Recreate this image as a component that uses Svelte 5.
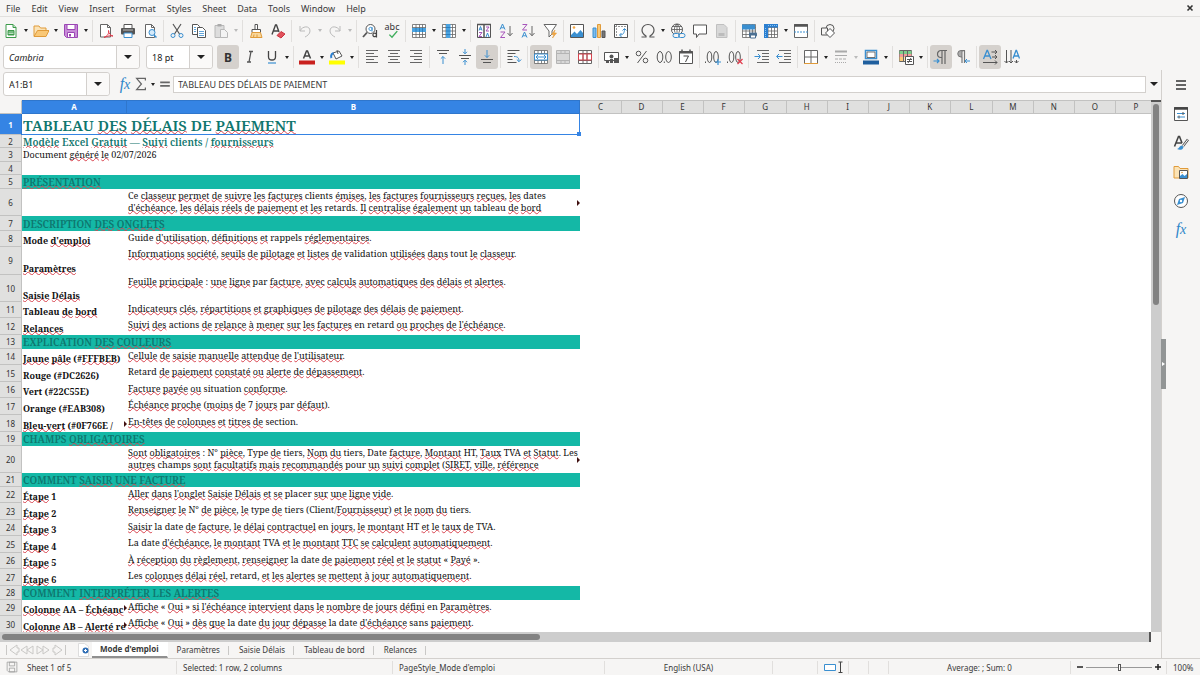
<script lang="ts">
  type Tool = {
    icon?: string;
    label?: string;
    drop?: boolean;
    active?: boolean;
    disabled?: boolean;
    sep?: boolean;
  };

  type Row = {
    h: number;
    kind?: 'title' | 'subtitle' | 'plain' | 'section';
    a?: string;
    b?: string;
    moreA?: boolean;
    moreB?: boolean;
  };

  const menus = ['File', 'Edit', 'View', 'Insert', 'Format', 'Styles', 'Sheet', 'Data', 'Tools', 'Window', 'Help'];

  const gridLines = '<path d="M1.5 1.5h13v13h-13zM1.5 4.5h13M1.5 8h13M1.5 11.5h13M5 1.5v13M8.5 1.5v13M11.5 1.5v13" fill="#fff" stroke="#666" stroke-width=".8"/>';
  const page = '<path d="M3.5 1.5h6l3 3v10h-9z" fill="#fff" stroke="#666"/><path d="M9.5 1.5v3h3" stroke="#666"/>';

  const icons: Record<string, string> = {
    new: '<path d="M3 1.5h7l3 3v10H3z" fill="#fff" stroke="#3c9a4a"/><path d="M10 1.5v3h3" fill="#bfe3c5" stroke="#3c9a4a"/><path d="M5 7.5h6v4.500H5z" fill="#3c9a4a" stroke="#3c9a4a"/><path d="M5.500 9h5M5.500 10.500h5" stroke="#d6f0da" stroke-width=".8"/>',
    open: '<path d="M1 13V3h5l1.500 2H13v2.500" fill="#fbe3b6" stroke="#e09b3a"/><path d="M1 13.500L4.500 7.500H16L13 13.500z" fill="#f9c877" stroke="#e09b3a"/>',
    save: '<path d="M1.500 1.500h13v13h-11l-2-2z" fill="#c88bd8" stroke="#9b46b4"/><path d="M4 1.500h8v5H4z" fill="#fff" stroke="#9b46b4"/><path d="M4.500 9.500h7v5h-7z" fill="#fff" stroke="#9b46b4"/><path d="M6 11v2.500h2V11z" fill="#9b46b4"/>',
    pdf: '<path d="M2.500 1.500h7l3 3v9.500h-10z" fill="#fff" stroke="#666"/><path d="M9.500 1.500v3h3" stroke="#666"/><path d="M6 14.500c4-2 5-4 4.500-7 0 3 2 5 4.500 5.500-3-.5-6 0-9 1.500z" stroke="#e0394a"/>',
    print: '<path d="M4 5.500v-4h8v4" fill="#fff" stroke="#555"/><rect x="1" y="5" width="14" height="6.500" rx="1" fill="#555"/><path d="M3 7h10" stroke="#bbb"/><path d="M4 10h8v4.500H4z" fill="#fff" stroke="#3a8fd0"/>',
    preview: page + '<circle cx="10" cy="9.500" r="3" fill="#d5eafa" stroke="#3a8fd0"/><path d="M12 12l2.500 2.500" stroke="#3a8fd0" stroke-width="1.500"/>',
    cut: '<path d="M4 1l6.500 10M12 1L5.500 11" stroke="#555" stroke-width="1.200"/><circle cx="4" cy="12.500" r="2" stroke="#3a8fd0"/><circle cx="12" cy="12.500" r="2" stroke="#3a8fd0"/>',
    copy: '<path d="M1.500 1.500h5l2 2v8h-7z" fill="#fff" stroke="#555"/><path d="M6.500 4.500h5l3 3v7h-8z" fill="#fff" stroke="#555"/><path d="M3 4.500h2M3 6.500h2M3 8.500h2M8 8.500h5M8 10.500h5M8 12.500h5" stroke="#3a8fd0" stroke-width=".8"/>',
    paste: '<path d="M2 2.500h9v12H2z" fill="#ddd" stroke="#b8b8b8"/><path d="M4.500 1h4v2.500h-4z" fill="#aaa"/><path d="M7.500 6.500h4l3 3v5h-7z" fill="#f3f3f3" stroke="#b8b8b8"/>',
    clone: '<path d="M7 1.500h2.500v5H7z" fill="#fff" stroke="#555"/><path d="M4 6.500h8.500v3H4z" fill="#fff" stroke="#555"/><path d="M4 9.500l-1.500 5h11.500l-1.500-5z" fill="#f9d79b" stroke="#e09b3a"/><path d="M6 11.500l-.5 3M9 11.500v3" stroke="#e09b3a"/>',
    clear: '<path d="M2 11.500L5.500 2h1L9 9M3.500 8h5" stroke="#444" stroke-width="1.400"/><path d="M7 12.500l4-4 4 2.500-4 4z" fill="#e2525c" stroke="#c9333f"/>',
    undo: '<path d="M3 3v5h5M3 8c2-5 10-6 10 0 0 3-3 5-5 6" stroke="#bbb"/>',
    redo: '<path d="M13 3v5H8M13 8c-2-5-10-6-10 0 0 3 3 5 5 6" stroke="#bbb"/>',
    find: '<circle cx="8.500" cy="6" r="4.500" fill="#fff" stroke="#555"/><path d="M5 9.500L1 14" stroke="#555" stroke-width="1.800"/><path d="M10 4v4.500M10 6.500a1.600 1.600 0 1 0-.1.200" stroke="#3a8fd0"/><path d="M14.500 7v7.500M14.500 12a1.800 1.800 0 1 0-.1.500" stroke="#444" stroke-width="1.200"/>',
    rows: gridLines + '<path d="M1 5h14v4H1z" fill="#4aa3e0"/><path d="M5 5v4M8.500 5v4M11.500 5v4" stroke="#2b7fc0"/>',
    cols: gridLines + '<path d="M5 1h4.500v14H5z" fill="#4aa3e0"/><path d="M5 4.500h4.500M5 8h4.500M5 11.500h4.500" stroke="#2b7fc0"/>',
    sort: '<path d="M1.500 1.500h13v13h-13z" fill="#fff" stroke="#555"/><path d="M1 1.500h14M8 2v13" stroke="#555" stroke-width="1.500"/><path d="M3 7.500l1.500-4L6 7.500M3.500 6.200h2M10 14l1.500-4L13 14" stroke="#3a8fd0"/><path d="M3 9.500h3l-3 4h3M10 4h3l-3 4h3" stroke="#a755bb"/>',
    asc: '<path d="M2 6.500L4.500 1 7 6.500M3 4.800h3" stroke="#3a8fd0"/><path d="M2.500 9H7l-4.500 5.500H7" stroke="#a755bb"/><path d="M12 3v9.500M9.500 10l2.500 2.800 2.500-2.800" stroke="#666"/>',
    desc: '<path d="M2.500 1.500H7L2.500 7H7" stroke="#a755bb"/><path d="M2 14.500L4.500 9 7 14.500M3 12.800h3" stroke="#3a8fd0"/><path d="M12 3v9.500M9.500 10l2.500 2.800 2.500-2.800" stroke="#666"/>',
    filter: '<path d="M2 1.500h12.500L10 8v3L7 14V8z" fill="#fff" stroke="#666"/><path d="M13 7l-3.500 4.500H12L10.500 15l4-5H12z" fill="#f5a742" stroke="#e09b3a" stroke-width=".6"/>',
    image: '<path d="M1.500 1.500h13v13h-13z" fill="#fff" stroke="#555"/><path d="M2 14v-2l3.500-3.500L8 11l3.500-4L14 10v4z" fill="#3a8fd0"/><circle cx="5" cy="4.500" r="1.300" fill="#f5a742"/>',
    chart: '<path d="M2 5h3v9.500H2z" fill="#7dbcec" stroke="#3a8fd0"/><path d="M6.500 1.500h3v13h-3z" fill="#f9c877" stroke="#e09b3a"/><path d="M11 8h3v6.500h-3z" fill="#777" stroke="#555"/>',
    pivot: '<path d="M1.500 1.500h13v13h-13z" fill="#fff" stroke="#555"/><path d="M2 3.500h12M3.500 2v12" stroke="#999" stroke-dasharray="2 1"/><path d="M7 12c3 0 4.500-2 4.500-6M9.500 7.500l2-2 2 2M8.500 10l-2 2 2 2" stroke="#3a8fd0"/>',
    omega: '<path d="M1.500 14h4.500v-1C3.500 11.500 2 9.500 2 7c0-3 2.500-5.500 6-5.500S14 4 14 7c0 2.500-1.500 4.500-4 6v1h4.500" stroke="#555" stroke-width="1.200"/>',
    link: '<circle cx="7" cy="6.500" r="5.500" fill="#fff" stroke="#555"/><path d="M1.500 6.500h11M2.500 3.500h9M7 1v10M7 1C3.500 4 3.500 9 7 12M7 1c3.500 3 3.500 8 0 11" stroke="#555" stroke-width=".8"/><rect x="3" y="10.500" width="6.500" height="4" rx="2" fill="#f6f5f4" stroke="#3a8fd0"/><rect x="8.500" y="10.500" width="6.500" height="4" rx="2" stroke="#3a8fd0"/>',
    comment: '<path d="M1.500 2h13v9H7l-2.500 3.500V11h-3z" fill="#fff" stroke="#555"/>',
    header: '<path d="M2.500 1.500h7.500l3 3v10H2.500z" fill="#d8d8d8" stroke="#c0c0c0"/><path d="M4.500 10h6v3h-6z" fill="#bcbcbc"/>',
    area: gridLines + '<path d="M1 1.500h13v5H1z" fill="#3a8fd0"/><rect x="8" y="9.500" width="8" height="4" rx="1" fill="#4b6f92"/><path d="M9.500 12h5v3h-5z" fill="#fff" stroke="#4b6f92"/>',
    freeze: gridLines + '<path d="M1 1h14v3.500H5V15H1z" fill="#2b7fd0"/><path d="M2.500 5v9M5 2.500h9" stroke="#8cc3f0" stroke-dasharray="1 1"/>',
    split: '<path d="M1.500 1.500h13v13h-13z" fill="#fff" stroke="#666"/><path d="M1 2.500h14" stroke="#555" stroke-width="2.500"/><path d="M1 9h14" stroke="#3a8fd0" stroke-dasharray="2 1"/>',
    shapes: '<circle cx="10" cy="5.500" r="4" stroke="#555"/><path d="M1.500 5h6v7h-6z" fill="#f6f5f4" stroke="#555"/><path d="M10 5.500l4.500 4.500-4.500 4.500L5.500 10z" fill="#fff" stroke="#555"/>',
    italic: '<path d="M7 2.500h4M5 13h4M9 2.500L7 13" stroke="#555" stroke-width="1.300"/>',
    under: '<path d="M4.500 2v6c0 4 7 4 7 0V2" stroke="#444" stroke-width="1.300"/><path d="M4 14h8" stroke="#3a8fd0" stroke-width="1.200"/>',
    color: '<path d="M4.500 9.500L7.500 2h1l3 7.500M5.500 7h5" stroke="#444" stroke-width="1.500"/><path d="M0 11.500h16v4H0z" fill="#c9211e"/>',
    fill: '<path d="M4 4l6-2 3 5-6 3z" fill="#fff" stroke="#555"/><path d="M8 1l1 4" stroke="#555"/><path d="M4.500 4C1.500 5 2 8 2.500 9" stroke="#2b7fd0" stroke-width="2"/><path d="M0 11.500h16v4H0z" fill="#ffff00"/>',
    left: '<path d="M2 1.500h12M2 4.500h8M2 7.500h12M2 10.500h8M2 13.500h12" stroke="#666"/>',
    center: '<path d="M2 1.500h12M4 4.500h8M2 7.500h12M4 10.500h8M2 13.500h12" stroke="#666"/>',
    right: '<path d="M2 1.500h12M6 4.500h8M2 7.500h12M6 10.500h8M2 13.500h12" stroke="#666"/>',
    top: '<path d="M2 1.500h12M4 4.500h8" stroke="#555"/><path d="M8 15V7.500M5.800 9.700L8 7.500l2.200 2.200" stroke="#3a8fd0"/>',
    middle: '<path d="M2 6.500h12M4 9.500h8" stroke="#555"/><path d="M8 0v4.500M6 2.800l2 2 2-2M8 16v-4.500M6 13.200l2-2 2 2" stroke="#3a8fd0"/>',
    bottom: '<path d="M2 10.500h12M4 13.500h8" stroke="#555"/><path d="M8 1v7.500M5.800 6.300L8 8.500l2.200-2.200" stroke="#3a8fd0"/>',
    wrap: '<path d="M1.500 1.500h12M1.500 4.500h8M1.500 7.500h5M1.500 10.500h5M1.500 13.500h9" stroke="#555"/><path d="M8 7.500c4 0 5 1.500 5 5M10.800 10.500l2.200 2.200 2.200-2.200" stroke="#3a8fd0"/>',
    merge: gridLines + '<path d="M1.500 5h13v6h-13z" fill="#fff" stroke="#3a8fd0"/><path d="M3 8h10M5 6L3 8l2 2M11 6l2 2-2 2" stroke="#3a8fd0"/>',
    mergec: '<path d="M1.500 1.500h13v13h-13zM1.500 4.500h13M1.500 11.500h13M6 1.500v3M10 1.500v3M6 11.500v3M10 11.500v3" fill="#d8d8d8" stroke="#b4b4b4"/>',
    unmerge: '<path d="M1.500 1.500h13v13h-13zM1.500 4.500h13M1.500 11.500h13M6 1.500v13M10 1.500v13" fill="#fff" stroke="#666"/><path d="M1.500 5h13v6h-13zM6 5v6M10 5v6" stroke="#d8434e"/>',
    currency: '<path d="M.5 3.500h14v8H.5z" fill="#fff" stroke="#555"/><circle cx="7.500" cy="7.500" r="2" fill="#555"/><path d="M2 12h3v2H2zM6 10h3v4H6zM10 9h5v5h-5z" fill="#555"/>',
    percent: '<circle cx="4.500" cy="4.500" r="2.300" stroke="#555"/><circle cx="11.500" cy="11.500" r="2.300" stroke="#555"/><path d="M12.500 2l-9 12" stroke="#555"/>',
    number: '<ellipse cx="4" cy="8" rx="2.800" ry="5.500" stroke="#555"/><ellipse cx="12.500" cy="8" rx="2.800" ry="5.500" stroke="#555"/><path d="M8.300 12.500v1.500" stroke="#555"/>',
    date: '<path d="M1.500 2.500h13v12h-13z" fill="#fff" stroke="#555"/><path d="M1 3.500h14" stroke="#555" stroke-width="2"/><path d="M4 .5v3M12 .5v3" stroke="#555" stroke-width="1.500"/><path d="M5.500 7h5L7.500 13" stroke="#444"/>',
    addDec: '<path d="M.5 12.500v1.500" stroke="#555"/><ellipse cx="4.500" cy="8" rx="2.300" ry="5.500" stroke="#555"/><ellipse cx="11" cy="8" rx="2.300" ry="5.500" stroke="#555"/><path d="M10 13h6M13 10v6" stroke="#3a8fd0" stroke-width="1.200"/>',
    delDec: '<path d="M.5 12.500v1.500" stroke="#555"/><ellipse cx="4.500" cy="8" rx="2.300" ry="5.500" stroke="#555"/><ellipse cx="11" cy="8" rx="2.300" ry="5.500" stroke="#555"/><path d="M10.500 10l5 5M15.500 10l-5 5" stroke="#e0394a" stroke-width="1.200"/>',
    indent: '<path d="M3 1.500h12M8 4.500h7M8 7.500h7M8 10.500h7M3 13.500h12" stroke="#666"/><path d="M.5 7.500H6M4 5l2.500 2.500L4 10" stroke="#3a8fd0"/>',
    outdent: '<path d="M3 1.500h12M8 4.500h7M8 7.500h7M8 10.500h7M3 13.500h12" stroke="#666"/><path d="M6.500 7.500H1M3 5L.5 7.500 3 10" stroke="#3a8fd0"/>',
    borders: '<path d="M1.500 1.500h13v13h-13zM8 1.500v13M1.500 8h13" fill="#fff" stroke="#666"/><path d="M1 14.500h14" stroke="#e09b3a"/>',
    lines: '<path d="M2 2.500h12" stroke="#aaa" stroke-width="2"/><path d="M2 6.500h12" stroke="#aaa"/><path d="M2 10h12" stroke="#aaa" stroke-dasharray="3 1"/><path d="M2 13.500h12" stroke="#aaa" stroke-dasharray="1 1"/>',
    lineColor: '<path d="M2.500 1.500h11v8h-11z" fill="#fff" stroke="#3a8fd0" stroke-width="1.500"/><path d="M4 3h8v5.500H4z" stroke="#555" stroke-width=".8"/><path d="M0 11.500h16v4H0z" fill="#1f5f9e"/>',
    cond: '<path d="M1.500 1.500h12v11h-12z" fill="#fff" stroke="#666"/><path d="M1.500 2h12v3h-12z" fill="#7ccf8b"/><path d="M1.500 5h12v3h-12z" fill="#f39a9a"/><path d="M1.500 8h5v4h-5z" fill="#f9c877"/><path d="M5.500 1.500v11M9.500 1.500v6" stroke="#666"/><path d="M7.500 7.500h8v8h-8z" fill="#fff" stroke="#555"/><path d="M9 10.500h5M9 12.500h5M13 9l-3 5" stroke="#555"/>',
    ltr: '<path d="M14 1.500H8a3.500 3.500 0 0 0 0 7h1V2M9 8v7M12 1.500V15" fill="none" stroke="#666" stroke-width="1.200"/><path d="M.5 12H6M4 10l2 2-2 2" stroke="#3a8fd0" stroke-width="1.200"/>',
    rtl: '<path d="M10 1.500H6a3.200 3.200 0 0 0 0 6.500h1V2z" fill="#aaa" stroke="#777"/><path d="M7 8v6M9.500 1.500V14" stroke="#777" stroke-width="1.200"/><path d="M15 12h-5M12 10l-2 2 2 2" stroke="#3a8fd0"/>',
    horiz: '<path d="M1.500 10L5 1.500h.5L9 10M3 7h4.500" stroke="#3a8fd0" stroke-width="1.300"/><path d="M9.500 3H15M13 1l2 2-2 2M10 8h5M13 6l2 2-2 2M1 13.500h14M13 11.500l2 2-2 2" stroke="#555"/>',
    vert: '<path d="M9 9.500l3-8h.5l3 8M10 7h4.500" stroke="#3a8fd0" stroke-width="1.300"/><path d="M2.500 1v13M.5 12l2 2 2-2M7 1v13M5 12l2 2 2-2M12.500 11v3M10.500 12l2 2 2-2" stroke="#555"/>',
    menu: '<path d="M3 4h10M3 8h10M3 12h10" stroke="#333" stroke-width="1.300"/>',
    props: '<path d="M1.500 1.500h13v13h-13z" fill="#fff" stroke="#555"/><path d="M1 2.500h14" stroke="#444" stroke-width="2.500"/><path d="M4 7.500h8M4 11h8" stroke="#3a8fd0"/><path d="M10 6v3M6 9.500v3" stroke="#555"/>',
    styles: '<path d="M1.500 11.500L5.500 1.500h1L9 8M3 8h6" stroke="#444" stroke-width="1.600"/><path d="M15 4.500L10 11" stroke="#555" stroke-width="2.600"/><path d="M15 4.500L10 11" stroke="#fff" stroke-width="1"/><path d="M4 14c2 0 2-3 5-3.500l1.500 1.500c-.5 3-4 3.500-6.500 2z" fill="#3a8fd0"/>',
    gallery: '<path d="M1 14V2.500h4.500L7 4.500h8V14z" fill="#fbe3b6" stroke="#e09b3a"/><path d="M6.500 6.500h8v8h-8z" fill="#fff" stroke="#555"/><path d="M7 14v-2l2.500-2 2 2 2.500-2v4z" fill="#3a8fd0"/><circle cx="9" cy="8.500" r=".8" fill="#e09b3a"/>',
    nav: '<circle cx="8" cy="8" r="6.500" fill="#fff" stroke="#555"/><path d="M12 4l-2 6-6 2 2-6z" fill="#3a8fd0"/><circle cx="8" cy="8" r="1.200" fill="#fff"/>',
    sigma: '<path d="M13 4V1.500H3L8.500 8 3 14.500h10V12" stroke="#666" stroke-width="1.400"/>',
    equals: '<path d="M2.500 6h11M2.500 10h11" stroke="#666" stroke-width="2"/>',
    addSheet: '<path d="M2.500 1.500h6l4 3v10h-10z" fill="#fff" stroke="#ddd"/><circle cx="9.500" cy="8.500" r="3" fill="#2f6eb5"/><path d="M8 8.500h3M9.500 7v3" stroke="#fff"/>',
    disk: '<path d="M1.500 1.500h13v13h-11l-2-2z" stroke="#999"/><path d="M4.500 1.500h7v5h-7zM4.500 9.500h7v5h-7z" stroke="#999"/>'
  };

  const t = (icon: string, label: string, extra: Tool = {}): Tool => ({ icon, label, ...extra });
  const sep: Tool = { sep: true };

  const standardBar: Tool[] = [
    t('new', 'New', { drop: true }), t('open', 'Open', { drop: true }), t('save', 'Save', { drop: true }), sep,
    t('pdf', 'Export as PDF'), t('print', 'Print'), t('preview', 'Print preview'), sep,
    t('cut', 'Cut'), t('copy', 'Copy'), t('paste', 'Paste', { drop: true, disabled: true }), sep,
    t('clone', 'Clone formatting'), t('clear', 'Clear formatting'), sep,
    t('undo', 'Undo', { drop: true, disabled: true }), t('redo', 'Redo', { drop: true, disabled: true }), sep,
    t('find', 'Find and replace'), t('spell', 'Spelling'), sep,
    t('rows', 'Rows', { drop: true }), t('cols', 'Columns', { drop: true }), sep,
    t('sort', 'Sort'), t('asc', 'Sort ascending'), t('desc', 'Sort descending'), t('filter', 'AutoFilter'), sep,
    t('image', 'Insert image'), t('chart', 'Insert chart'), t('pivot', 'Pivot table'), sep,
    t('omega', 'Special character', { drop: true }), t('link', 'Hyperlink'), t('comment', 'Comment'),
    t('header', 'Headers and footers', { disabled: true }), sep,
    t('area', 'Print area'), t('freeze', 'Freeze rows and columns', { drop: true }), t('split', 'Split window'), sep,
    t('shapes', 'Draw functions')
  ];

  const formatBar: Tool[] = [
    t('bold', 'Bold', { active: true }), t('italic', 'Italic'), t('under', 'Underline', { drop: true }), sep,
    t('color', 'Font color', { drop: true }), t('fill', 'Background color', { drop: true }), sep,
    t('left', 'Align left'), t('center', 'Center'), t('right', 'Align right'), sep,
    t('top', 'Align top'), t('middle', 'Center vertically'), t('bottom', 'Align bottom', { active: true }), sep,
    t('wrap', 'Wrap text'), sep,
    t('merge', 'Merge and center', { active: true }), t('mergec', 'Merge cells', { disabled: true }), t('unmerge', 'Unmerge cells'), sep,
    t('currency', 'Currency', { drop: true }), t('percent', 'Percent'), t('number', 'Number'), t('date', 'Date'), sep,
    t('addDec', 'Add decimal place'), t('delDec', 'Delete decimal place'), sep,
    t('indent', 'Increase indent'), t('outdent', 'Decrease indent'), sep,
    t('borders', 'Borders', { drop: true }), t('lines', 'Border style', { drop: true, disabled: true }),
    t('lineColor', 'Border color', { drop: true }), sep,
    t('cond', 'Conditional formatting', { drop: true }), sep,
    t('ltr', 'Left to right', { active: true }), t('rtl', 'Right to left'), sep,
    t('horiz', 'Text direction horizontal', { active: true }), t('vert', 'Text direction vertical')
  ];

  const sideItems = [
    ['menu', 'Sidebar settings'],
    ['props', 'Properties'],
    ['styles', 'Styles'],
    ['gallery', 'Gallery'],
    ['nav', 'Navigator'],
    ['fx', 'Functions']
  ];

  const columns = 'CDEFGHIJKLMNOP'.split('');

  const rows: Row[] = [
    { h: 21, kind: 'title', a: 'TABLEAU DES DÉLAIS DE PAIEMENT' },
    { h: 13, kind: 'subtitle', a: 'Modèle Excel Gratuit — Suivi clients / fournisseurs' },
    { h: 14, kind: 'plain', a: 'Document généré le 02/07/2026' },
    { h: 13 },
    { h: 14, kind: 'section', a: 'PRÉSENTATION' },
    {
      h: 27,
      b: "Ce classeur permet de suivre les factures clients émises, les factures fournisseurs reçues, les dates\nd'échéance, les délais réels de paiement et les retards. Il centralise également un tableau de bord",
      moreB: true
    },
    { h: 15, kind: 'section', a: 'DESCRIPTION DES ONGLETS' },
    { h: 16, a: "Mode d'emploi", b: "Guide d'utilisation, définitions et rappels réglementaires." },
    { h: 28, a: 'Paramètres', b: 'Informations société, seuils de pilotage et listes de validation utilisées dans tout le classeur.' },
    { h: 27, a: 'Saisie Délais', b: 'Feuille principale : une ligne par facture, avec calculs automatiques des délais et alertes.' },
    { h: 16, a: 'Tableau de bord', b: 'Indicateurs clés, répartitions et graphiques de pilotage des délais de paiement.' },
    { h: 17, a: 'Relances', b: "Suivi des actions de relance à mener sur les factures en retard ou proches de l'échéance." },
    { h: 14, kind: 'section', a: 'EXPLICATION DES COULEURS' },
    { h: 16, a: 'Jaune pâle (#FFFBEB)', b: "Cellule de saisie manuelle attendue de l'utilisateur." },
    { h: 17, a: 'Rouge (#DC2626)', b: 'Retard de paiement constaté ou alerte de dépassement.' },
    { h: 16, a: 'Vert (#22C55E)', b: 'Facture payée ou situation conforme.' },
    { h: 17, a: 'Orange (#EAB308)', b: 'Échéance proche (moins de 7 jours par défaut).' },
    { h: 17, a: 'Bleu-vert (#0F766E /', b: 'En-têtes de colonnes et titres de section.', moreA: true },
    { h: 14, kind: 'section', a: 'CHAMPS OBLIGATOIRES' },
    {
      h: 27,
      b: 'Sont obligatoires : N° pièce, Type de tiers, Nom du tiers, Date facture, Montant HT, Taux TVA et Statut. Les\nautres champs sont facultatifs mais recommandés pour un suivi complet (SIRET, ville, référence',
      moreB: true
    },
    { h: 14, kind: 'section', a: 'COMMENT SAISIR UNE FACTURE' },
    { h: 16, a: 'Étape 1', b: "Aller dans l'onglet Saisie Délais et se placer sur une ligne vide." },
    { h: 17, a: 'Étape 2', b: 'Renseigner le N° de pièce, le type de tiers (Client/Fournisseur) et le nom du tiers.' },
    { h: 16, a: 'Étape 3', b: 'Saisir la date de facture, le délai contractuel en jours, le montant HT et le taux de TVA.' },
    { h: 17, a: 'Étape 4', b: "La date d'échéance, le montant TVA et le montant TTC se calculent automatiquement." },
    { h: 16, a: 'Étape 5', b: 'À réception du règlement, renseigner la date de paiement réel et le statut « Payé ».' },
    { h: 17, a: 'Étape 6', b: 'Les colonnes délai réel, retard, et les alertes se mettent à jour automatiquement.' },
    { h: 14, kind: 'section', a: 'COMMENT INTERPRÉTER LES ALERTES' },
    { h: 16, a: 'Colonne AA – Échéanc', b: "Affiche « Oui » si l'échéance intervient dans le nombre de jours défini en Paramètres.", moreA: true },
    { h: 17, a: 'Colonne AB – Alerté re', b: "Affiche « Oui » dès que la date du jour dépasse la date d'échéance sans paiement.", moreA: true }
  ];

  const sheets = ["Mode d'emploi", 'Paramètres', 'Saisie Délais', 'Tableau de bord', 'Relances'];
  let current = $state(0);
  let zoom = $state(100);

  // words the English dictionary accepts
  const known = new Set(
    ('TABLEAU DE Excel clients Document DESCRIPTION EXPLICATION CHAMPS COMMENT LES Ce dates retards tableau Mode Guide ' +
      'rappels validation tout par Tableau actions en retard Retard Rouge Vert Orange situation section N° Type type tiers ' +
      'Date date HT TVA Les champs pour placer Client la La sans AA AB re').split(' ')
  );

  function words(text: string) {
    return text.split(/([\p{L}\d°'-]+)/u).map((w, i) => ({
      w,
      bad: i % 2 === 1 && !/\d/.test(w) && !known.has(w)
    }));
  }
</script>

{#snippet icon(name: string)}
  {#if name === 'spell'}
    <span class="spell">abc<svg viewBox="0 0 16 16" aria-hidden="true"><path d="M5 11l3 3 6-7" stroke="#3fae5c" stroke-width="1.600" /></svg></span>
  {:else if name === 'bold'}
    <b class="bold">B</b>
  {:else if name === 'fx'}
    <i class="fx">f<small>x</small></i>
  {:else}
    <svg class="icon" viewBox="0 0 16 16" aria-hidden="true">{@html icons[name]}</svg>
  {/if}
{/snippet}

{#snippet toolbar(items: Tool[])}
  {#each items as item}
    {#if item.sep}
      <span class="sep"></span>
    {:else}
      <button type="button" class="tool" class:active={item.active} disabled={item.disabled} aria-label={item.label}>
        {@render icon(item.icon ?? '')}
      </button>
      {#if item.drop}
        <button type="button" class="drop" disabled={item.disabled} aria-label={`${item.label} options`}><span class="arrow"></span></button>
      {/if}
    {/if}
  {/each}
{/snippet}

{#snippet checked(text: string)}{#each words(text) as part}{#if part.bad}<span class="bad">{part.w}</span>{:else}{part.w}{/if}{/each}{/snippet}

<div class="app">
  <nav class="menubar">
    {#each menus as m}
      <button type="button">{m}</button>
    {/each}
    <button type="button" class="close" aria-label="Close document">
      <svg viewBox="0 0 8 8" aria-hidden="true"><path d="M1.500 1.500l5 5M6.500 1.500l-5 5" stroke="#333" stroke-width="1.600" /></svg>
    </button>
  </nav>

  <div class="toolbar">{@render toolbar(standardBar)}</div>

  <div class="toolbar format">
    <div class="combo font">
      <input aria-label="Font name" value="Cambria" />
      <button type="button" aria-label="Choose font"><span class="arrow big"></span></button>
    </div>
    <div class="combo size">
      <input aria-label="Font size" value="18 pt" />
      <button type="button" aria-label="Choose size"><span class="arrow big"></span></button>
    </div>
    {@render toolbar(formatBar)}
  </div>

  <div class="body">
    <main>
      <div class="formula">
        <div class="combo name">
          <input aria-label="Name box" value="A1:B1" />
          <button type="button" aria-label="Choose range"><span class="arrow big"></span></button>
        </div>
        <button type="button" class="small" aria-label="Function wizard">{@render icon('fx')}</button>
        <button type="button" class="small" aria-label="Select function">{@render icon('sigma')}</button>
        <button type="button" class="drop" aria-label="Function list"><span class="arrow"></span></button>
        <button type="button" class="small" aria-label="Formula">{@render icon('equals')}</button>
        <input class="line" aria-label="Input line" value="TABLEAU DES DÉLAIS DE PAIEMENT" />
        <button type="button" class="expand" aria-label="Expand formula bar"><span class="arrow big"></span></button>
      </div>

      <div class="sheet">
        <div class="grid">
          <table>
            <colgroup>
              <col class="c-num" />
              <col class="c-a" />
              <col class="c-b" />
              {#each columns as _, i}
                <col class={i % 5 === 4 ? 'c-wide' : 'c-std'} />
              {/each}
            </colgroup>
            <thead>
              <tr>
                <th class="corner" aria-label="Select all"></th>
                <th class="on">A</th>
                <th class="on">B</th>
                {#each columns as c}
                  <th>{c}</th>
                {/each}
              </tr>
            </thead>
            <tbody>
              {#each rows as row, i}
                <tr>
                  <th class:on={i === 0}><div class="num" style={`height:${row.h}px`}>{i + 1}</div></th>
                  {#if row.kind}
                    <td colspan="2" class={row.kind}>
                      <div class="cell" style={`height:${row.h}px`}><span>{@render checked(row.a ?? '')}</span></div>
                      {#if i === 0}<span class="handle"></span>{/if}
                    </td>
                  {:else}
                    <td class="label">
                      <div class="cell" style={`height:${row.h}px`}><span>{@render checked(row.a ?? '')}</span></div>
                      {#if row.moreA}<span class="more"></span>{/if}
                    </td>
                    <td class="text">
                      <div class="cell" style={`height:${row.h}px`}><span>{@render checked(row.b ?? '')}</span></div>
                      {#if row.moreB}<span class="more"></span>{/if}
                    </td>
                  {/if}
                  <td colspan="14"></td>
                </tr>
              {/each}
            </tbody>
          </table>
        </div>
        <div class="vscroll"><div class="thumb"></div></div>
      </div>
      <div class="hscroll"><div class="thumb"></div></div>

      <div class="tabs">
        <div class="tabnav" aria-hidden="true">
          <svg viewBox="0 0 62 12"><path d="M1.500 1v10M12 1L5 6l7 5V8h2V4h-2zM22 2l-6 4 6 4zM28 2l-6 4 6 4zM32 2l6 4-6 4zM38 2l6 4-6 4zM50 1l7 5-7 5V8h-2V4h2zM60.500 1v10" stroke="#c9c8c6" fill="none" /></svg>
        </div>
        <button type="button" class="add" aria-label="Add sheet">{@render icon('addSheet')}</button>
        {#each sheets as s, i}
          <button type="button" class="tab" class:current={i === current} onclick={() => (current = i)}>{s}</button>
        {/each}
      </div>
    </main>

    <aside>
      {#each sideItems as [name, label]}
        <button type="button" aria-label={label}>{@render icon(name)}</button>
      {/each}
      <div class="grip"></div>
    </aside>
  </div>

  <footer>
    <div class="doc">{@render icon('disk')}<span>Sheet 1 of 5</span></div>
    <div>Selected: 1 row, 2 columns</div>
    <div>PageStyle_Mode d'emploi</div>
    <div class="mid">English (USA)</div>
    <div></div>
    <div class="mode">
      <svg viewBox="0 0 20 12" aria-hidden="true"><path d="M.5 3.500h11v6H.5z" fill="#fff" stroke="#3a8fd0" /><path d="M14.500 1h4M14.500 11.500h4M16.500 1v10" stroke="#444" fill="none" /></svg>
    </div>
    <div></div>
    <div></div>
    <div class="mid">Average: ; Sum: 0</div>
    <div class="zoom">
      <button type="button" aria-label="Zoom out" onclick={() => (zoom -= 5)}><svg viewBox="0 0 8 8" aria-hidden="true"><path d="M1 4h6" stroke="#222" stroke-width="1.500" /></svg></button>
      <input type="range" min="0" max="200" bind:value={zoom} aria-label="Zoom" />
      <button type="button" aria-label="Zoom in" onclick={() => (zoom += 5)}><svg viewBox="0 0 8 8" aria-hidden="true"><path d="M1 4h6M4 1v6" stroke="#222" stroke-width="1.500" /></svg></button>
    </div>
    <div>{zoom}%</div>
  </footer>
</div>

<style>
  :global(body) {
    margin: 0;
    background: #f6f5f4;
  }

  .app {
    display: flex;
    flex-direction: column;
    height: 100vh;
    overflow: hidden;
    background: #f6f5f4;
    color: #3a3a3a;
    font-family: 'Noto Sans', 'Open Sans', sans-serif;
    font-size: 8px;
  }

  button,
  input {
    box-sizing: border-box;
    margin: 0;
    padding: 0;
    border: 0;
    background: none;
    color: inherit;
    font: inherit;
  }

  svg {
    display: block;
    fill: none;
  }

  .menubar {
    display: flex;
    align-items: center;
    gap: 11px;
    box-sizing: border-box;
    height: 17px;
    flex: none;
    padding: 0 6px;
    border-bottom: 1px solid #e1e0de;
    font-size: 9px;
  }

  .close {
    margin-left: auto;
  }

  .close svg {
    width: 8px;
    height: 8px;
  }

  .toolbar {
    display: flex;
    align-items: center;
    height: 27px;
    flex: none;
  }

  .tool {
    display: grid;
    place-items: center;
    width: 22px;
    height: 24px;
    flex: none;
    border-radius: 3px;
  }

  .tool.active {
    background: #d5d1cd;
  }

  .icon {
    width: 16px;
    height: 16px;
  }

  .drop {
    display: grid;
    place-items: center;
    width: 8px;
    height: 24px;
    flex: none;
  }

  .arrow {
    border: 2px solid transparent;
    border-top: 3px solid #222;
    border-bottom: 0;
  }

  .arrow.big {
    border-width: 4px 4px 0;
  }

  .drop:disabled .arrow {
    border-top-color: #bbb;
  }

  .sep {
    width: 1px;
    height: 22px;
    margin: 0 2px;
    flex: none;
    background: #e1dfdd;
  }

  .spell {
    position: relative;
    display: block;
    height: 16px;
    color: #333;
    font-size: 9px;
    line-height: 8px;
  }

  .spell svg {
    position: absolute;
    right: 0;
    bottom: 0;
    width: 14px;
    height: 14px;
  }

  .bold {
    color: #333;
    font-size: 12px;
  }

  .fx {
    color: #2f86c9;
    font-family: 'Liberation Serif', serif;
    font-size: 16px;
    line-height: 16px;
  }

  .fx small {
    font-size: 14px;
  }

  .combo {
    display: flex;
    box-sizing: border-box;
    height: 24px;
    flex: none;
    border: 1px solid #d3d0cd;
    border-radius: 3px;
    background: #fff;
    color: #222;
    font-size: 9px;
  }

  .combo input {
    flex: 1;
    min-width: 0;
    padding-left: 5px;
  }

  .combo button {
    display: grid;
    place-items: center;
    width: 23px;
    border-left: 1px solid #d3d0cd;
    border-radius: 0 3px 3px 0;
    background: #faf9f8;
  }

  .font {
    width: 137px;
    margin: 0 6px 0 3px;
    font-style: italic;
  }

  .size {
    width: 67px;
    margin-right: 4px;
  }

  .name {
    width: 107px;
    margin: 0 7px 0 3px;
  }

  .format {
    height: 26px;
  }

  .body {
    display: flex;
    flex: 1;
    min-height: 0;
  }

  main {
    display: flex;
    flex-direction: column;
    flex: 1;
    min-width: 0;
  }

  .formula {
    display: flex;
    align-items: center;
    box-sizing: border-box;
    height: 30px;
    flex: none;
    padding-bottom: 2px;
  }

  .small {
    display: grid;
    place-items: center;
    width: 16px;
    height: 20px;
    flex: none;
  }

  .small .icon {
    width: 14px;
    height: 14px;
  }

  .line {
    flex: 1;
    height: 17px;
    padding: 0 4px;
    border: 1px solid #d3d0cd;
    background: #fff;
    font-size: 9px;
  }

  .expand {
    display: grid;
    place-items: center;
    width: 15px;
    height: 20px;
  }

  .expand .arrow,
  .combo .arrow {
    border-top-color: #222;
  }

  .sheet {
    display: flex;
    flex: 1;
    min-height: 0;
  }

  .grid {
    flex: 1;
    min-width: 0;
    overflow: hidden;
    background: #fff;
  }

  table {
    width: 1157px;
    border-collapse: separate;
    border-spacing: 0;
    table-layout: fixed;
  }

  .c-num {
    width: 22px;
  }

  .c-a {
    width: 105px;
  }

  .c-b {
    width: 453px;
  }

  .c-std {
    width: 41px;
  }

  .c-wide {
    width: 42px;
  }

  th,
  td {
    position: relative;
    padding: 0;
  }

  th {
    box-sizing: border-box;
    border-right: 1px solid #c2c2c1;
    background: #e0e0df;
    color: #333;
    font-weight: normal;
  }

  thead th {
    height: 14px;
    border-top: 1px solid #c2c2c1;
    border-bottom: 1px solid #c2c2c1;
    line-height: 12px;
  }

  th.on {
    border-color: #2f76cc;
    background: #3584e4;
    color: #fff;
    font-weight: bold;
  }

  th.corner {
    border-color: #f6f5f4 #c2c2c1 #c2c2c1 #f6f5f4;
    background: #f6f5f4;
  }

  .num {
    display: flex;
    align-items: center;
    justify-content: center;
    box-sizing: border-box;
    border-bottom: 1px solid #c2c2c1;
  }

  .cell {
    display: flex;
    box-sizing: border-box;
    padding: 0 1px;
    overflow: hidden;
    color: #111;
    font-family: 'Noto Serif', 'DejaVu Serif Condensed', 'DejaVu Serif', serif;
    font-size: 9px;
    line-height: 12px;
    white-space: pre;
  }

  .bad {
    text-decoration: underline wavy #d8434e 1px;
    text-decoration-skip-ink: none;
    text-underline-offset: -1px;
  }

  .title .cell {
    align-items: center;
    color: #0f766e;
    font-size: 15px;
    font-weight: 600;
    line-height: 20px;
  }

  .title {
    box-shadow: inset -1px -1px #3584e4;
  }

  .subtitle .cell,
  .plain .cell {
    align-items: center;
  }

  .subtitle .cell,
  .section .cell {
    color: #0f766e;
    font-size: 10px;
    font-weight: 600;
  }

  .section {
    background: #14b8a6;
  }

  .section .cell {
    align-items: center;
  }

  .label .cell {
    align-items: flex-end;
    font-weight: bold;
  }

  .text .cell {
    padding-top: 1px;
  }

  .handle {
    position: absolute;
    right: -1px;
    bottom: -1px;
    z-index: 1;
    width: 4px;
    height: 4px;
    background: #3584e4;
  }

  .more {
    position: absolute;
    top: calc(50% - 3px);
    right: 0;
    border: 3px solid transparent;
    border-right: 0;
    border-left-color: #401010;
  }

  .vscroll {
    box-sizing: border-box;
    width: 10px;
    flex: none;
    border-top: 2px solid #555;
    background: #cdcdcd;
  }

  .vscroll .thumb {
    width: 6px;
    height: 38%;
    margin: 2px;
    border-radius: 3px;
    background: #828282;
  }

  .hscroll {
    height: 10px;
    flex: none;
    margin-right: 10px;
    padding: 2px;
    box-sizing: border-box;
    border-right: 2px solid #555;
    background: #cdcdcd;
  }

  .hscroll .thumb {
    width: 47%;
    height: 6px;
    border-radius: 3px;
    background: #828282;
  }

  .tabs {
    display: flex;
    height: 16px;
    flex: none;
  }

  .tabnav {
    width: 62px;
    margin: 2px 9px 0 5px;
  }

  .add {
    width: 16px;
  }

  .tab {
    padding: 0 9px;
    border-right: 1px solid transparent;
    background: linear-gradient(#c9c8c6, #c9c8c6) right center / 1px 9px no-repeat;
    line-height: 14px;
  }

  .tab.current {
    padding: 0 8px;
    border-bottom: 2px solid #909090;
    background: #fff;
    font-weight: bold;
  }

  aside {
    position: relative;
    display: flex;
    flex-direction: column;
    align-items: center;
    width: 39px;
    box-sizing: border-box;
    flex: none;
    border-left: 1px solid #d3d0cd;
  }

  aside button {
    display: grid;
    place-items: center;
    width: 24px;
    height: 29px;
  }

  .grip {
    position: absolute;
    top: 50%;
    left: -1px;
    width: 5px;
    height: 50px;
    margin-top: -25px;
    background: #929595;
  }

  .grip::after {
    position: absolute;
    top: 23px;
    left: 1px;
    border: 2px solid transparent;
    border-left: 3px solid #fff;
    border-right: 0;
    content: '';
  }

  footer {
    display: grid;
    grid-template-columns: 177fr 216fr 212fr 168fr 45fr 31fr 20fr 20fr 182fr 96fr 33fr;
    align-items: center;
    box-sizing: border-box;
    height: 17px;
    flex: none;
    border-top: 1px solid #d3d0cd;
  }

  footer > div {
    display: flex;
    align-items: center;
    box-sizing: border-box;
    height: 13px;
    padding-left: 6px;
    border-right: 1px solid #e1dfdd;
    white-space: nowrap;
  }

  footer > div:last-child {
    border-right: 0;
  }

  .doc {
    gap: 9px;
  }

  .doc .icon {
    width: 12px;
    height: 12px;
  }

  footer .mid {
    justify-content: center;
    padding: 0;
  }

  .mode svg {
    width: 20px;
    height: 12px;
  }

  footer .zoom {
    justify-content: space-between;
    padding: 0 4px 0 5px;
  }

  .zoom svg {
    width: 8px;
    height: 8px;
  }

  .zoom input {
    width: 66px;
    height: 8px;
    appearance: none;
    background: linear-gradient(#999, #999) center / 100% 1px no-repeat;
  }

  .zoom input::-webkit-slider-thumb {
    width: 3px;
    height: 7px;
    box-sizing: border-box;
    appearance: none;
    border: 1px solid #555;
    background: #fff;
  }
</style>
